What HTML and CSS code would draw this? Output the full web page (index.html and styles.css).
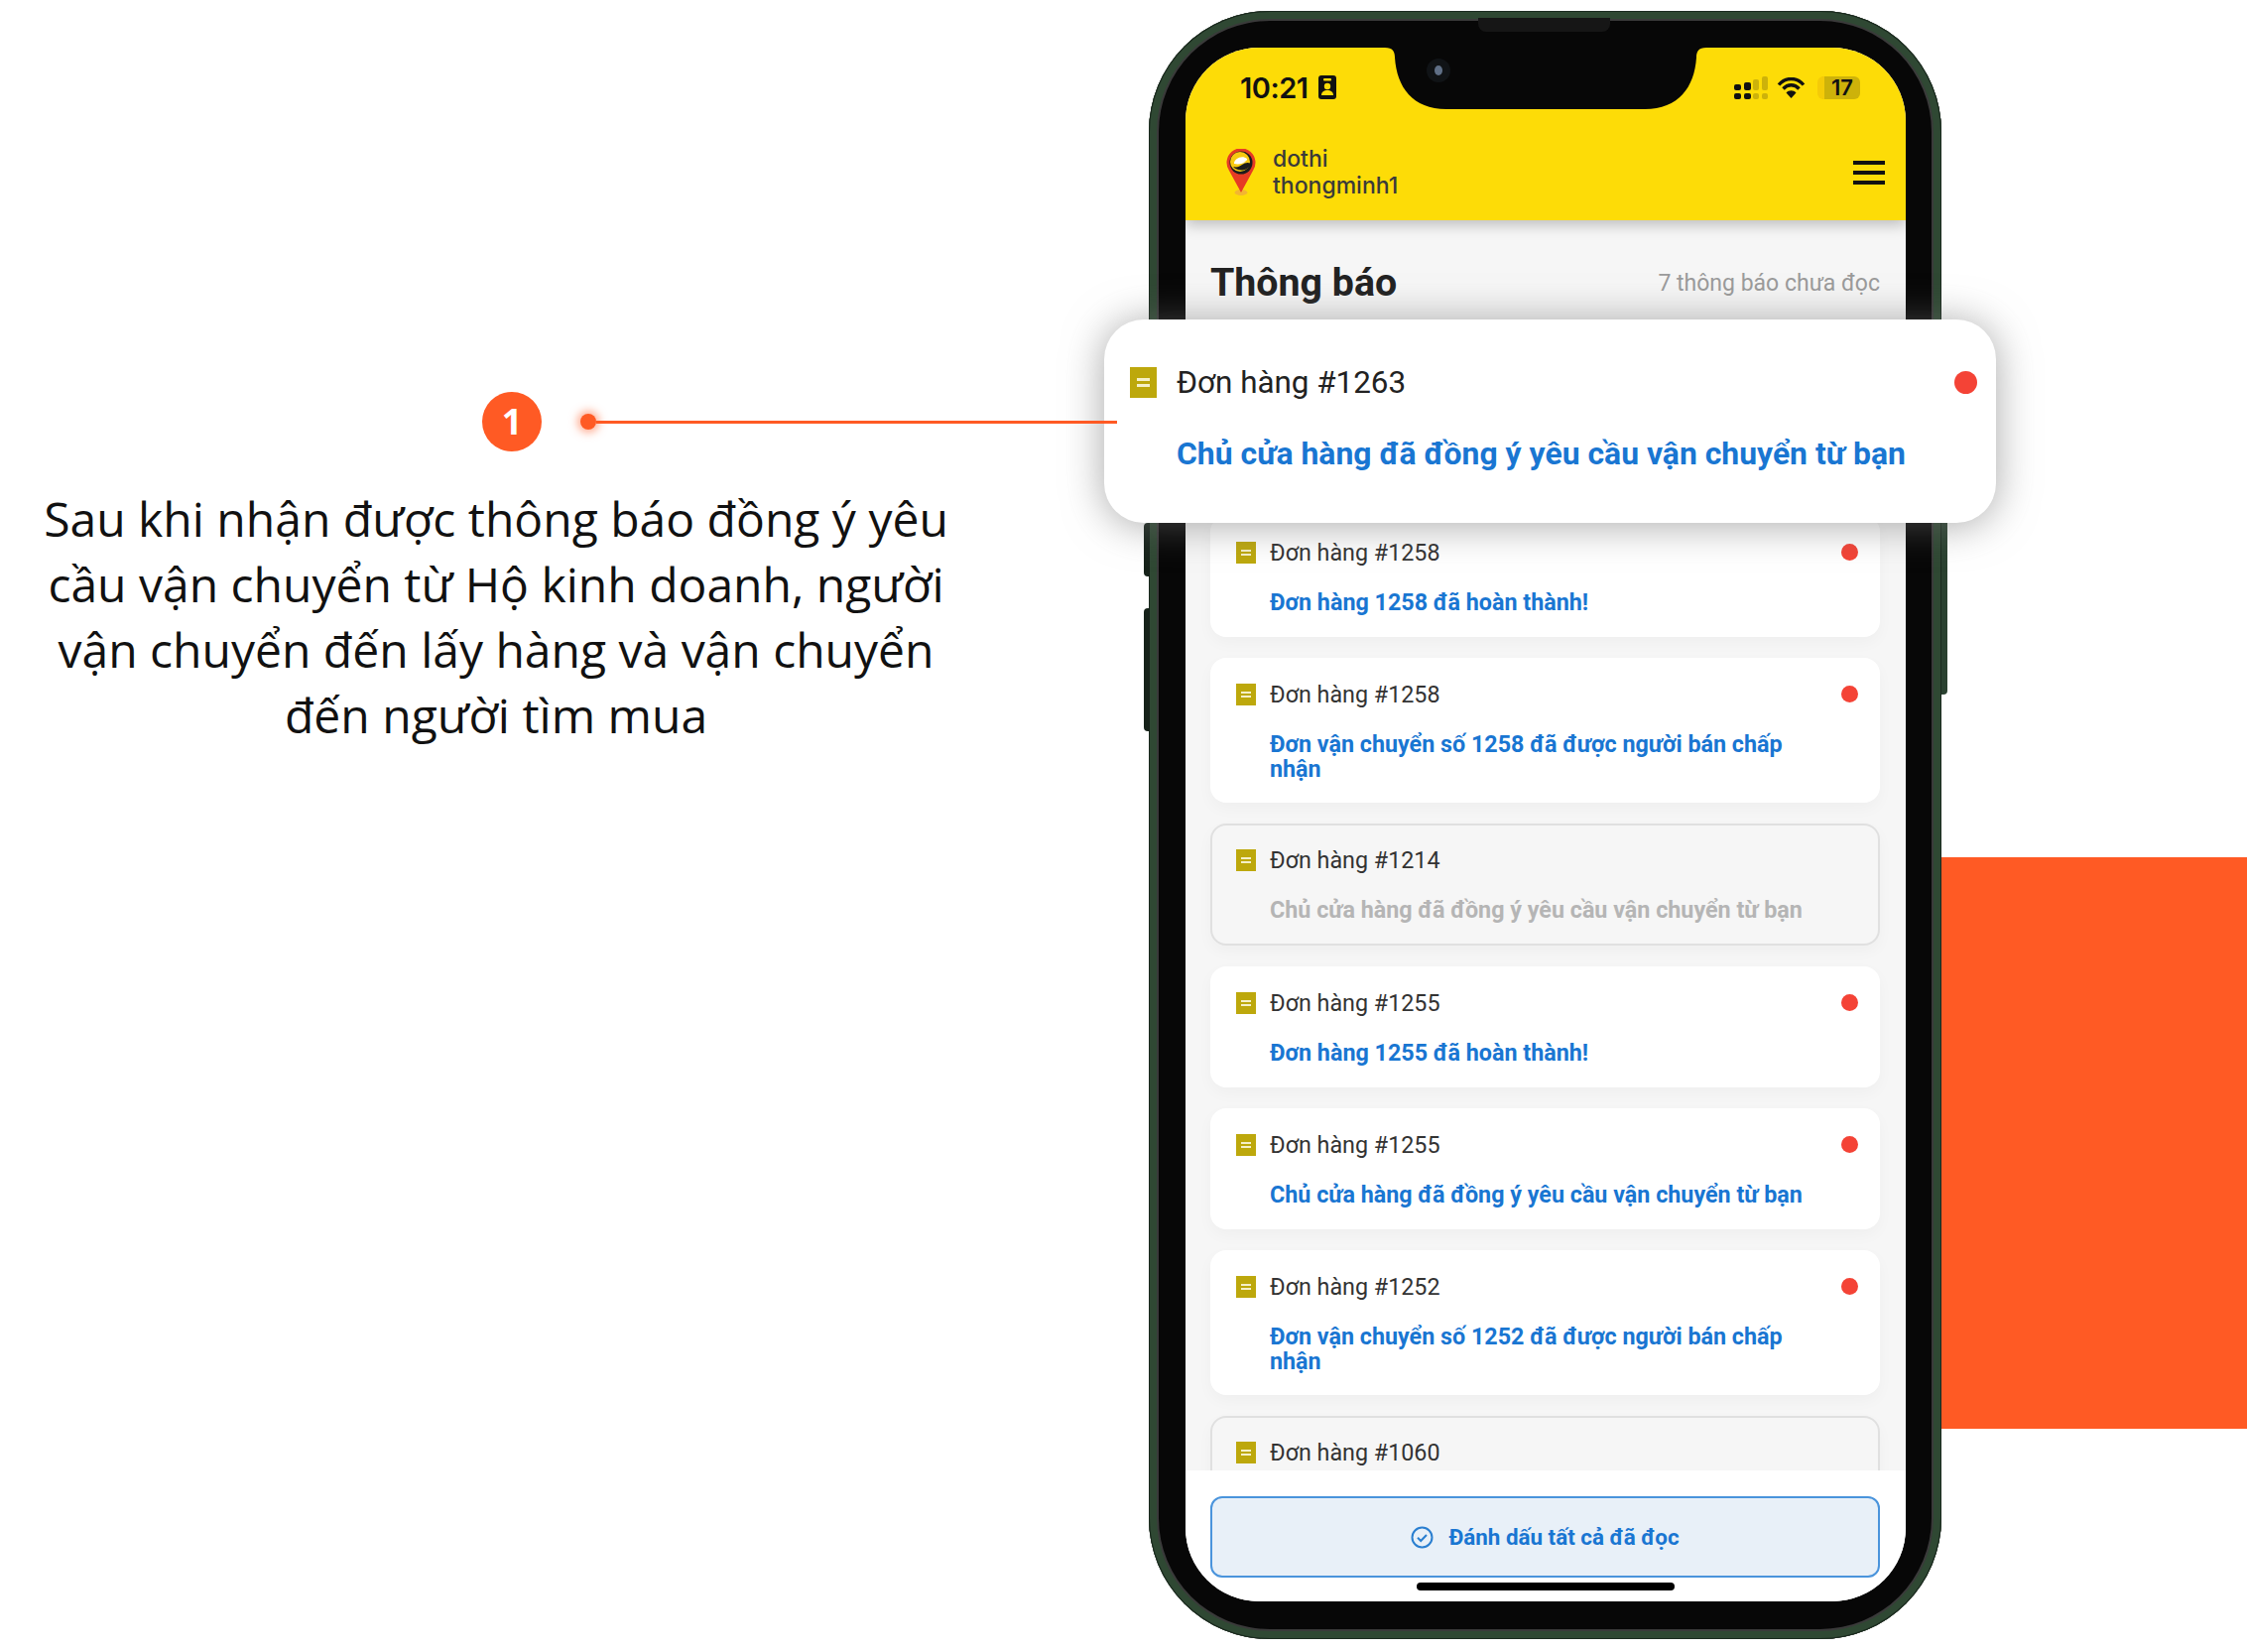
FILE: index.html
```html
<!DOCTYPE html>
<html lang="en">
    <head>
        <meta charset="UTF-8" />
        <meta name="viewport" content="width=device-width, initial-scale=1.0" />
        <title>Thông báo</title>
        <link rel="stylesheet" href="styles.css">
    </head>
    <body>
        <div class="page">
            <div class="orange-block"></div>

            <div class="callout">
                <div class="callout-head">
                    <div class="badge">1</div>
                    <div class="dot-glow"></div>
                    <div class="connector"></div>
                </div>
                <p class="callout-text">Sau khi nhận được thông báo đồng ý yêu cầu vận chuyển từ Hộ kinh doanh, người vận chuyển đến lấy hàng và vận chuyển đến người tìm mua</p>
            </div>

            <div class="phone">
                <div class="side-btn side-btn-1"></div>
                <div class="side-btn side-btn-2"></div>
                <div class="side-btn side-btn-r"></div>
                <div class="speaker"></div>
                <div class="screen">
                    <svg class="notch" width="324" height="62" viewBox="0 0 324 62">
                        <path d="M0 0H324C316 0 314 4 314 10C312 40 296 62 262 62H62C28 62 12 40 10 10C10 4 8 0 0 0Z" fill="#070707"/>
                        <circle cx="54" cy="23" r="12" fill="#101316"/>
                        <ellipse cx="54" cy="23" rx="4" ry="5" fill="#5f6f86"/>
                    </svg>
                    <div class="top-yellow">
                        <div class="status-bar">
                            <div class="status-left">
                                <span class="time">10:21</span>
                                <svg class="contact-icon" width="18" height="24" viewBox="0 0 18 24">
                                    <rect width="18" height="24" rx="3" fill="#111"/>
                                    <rect x="5" y="3" width="8" height="2.4" rx="1" fill="#fddc07"/>
                                    <circle cx="9" cy="11" r="3.2" fill="#fddc07"/>
                                    <path d="M3 20c0-3.4 2.6-5 6-5s6 1.600 6 5z" fill="#fddc07"/>
                                </svg>
                            </div>
                            <div class="status-right">
                                <svg width="35" height="23" viewBox="0 0 35 23">
                                    <rect x="0" y="8" width="7" height="6" rx="2" fill="#111"/>
                                    <rect x="0" y="17" width="7" height="6" rx="2" fill="#111"/>
                                    <rect x="10" y="6" width="7" height="8" rx="2" fill="#111"/>
                                    <rect x="10" y="17" width="7" height="6" rx="2" fill="#111"/>
                                    <rect x="19" y="3" width="6" height="11" rx="2" fill="#cdb20a"/>
                                    <rect x="19" y="17" width="6" height="6" rx="2" fill="#cdb20a"/>
                                    <rect x="28" y="0" width="6" height="14" rx="2" fill="#cdb20a"/>
                                    <rect x="28" y="17" width="6" height="6" rx="2" fill="#cdb20a"/>
                                </svg>
                                <svg class="wifi" width="29" height="21" viewBox="0 0 29 21">
                                    <path d="M2 7.500C9-.5 20-.5 27 7.500M6.500 11.500C11 6.500 18 6.500 22.500 11.500" fill="none" stroke="#111" stroke-width="3.400"/>
                                    <path d="M14.500 21 9.500 15.500C12 12.500 17 12.500 19.500 15.500z" fill="#111"/>
                                </svg>
                                <div class="battery"><span class="battery-num">17</span></div>
                            </div>
                        </div>
                        <div class="app-header">
                            <div class="brand">
                                <svg class="brand-pin" width="30" height="48" viewBox="0 0 30 48">
                                    <ellipse cx="15" cy="44" rx="6.500" ry="3" fill="#f2b632"/>
                                    <path d="M15 44 3 22A14.500 14.500 0 1 1 27 22z" fill="#e63b24"/>
                                    <circle cx="15" cy="14" r="11.500" fill="#1c1c1c"/>
                                    <circle cx="14" cy="13" r="10" fill="#f7c911"/>
                                    <path d="M25 15c-3-2-6-1-9 1-3 2-5 3-9 2 3 4 11 5 15 1 1-1 2-2 3-4z" fill="#1c1c1c"/>
                                    <path d="M8 15c0-5 8-9 13-5 1 2-4 4-8 4 3 0 5-1 7-1-3 2-8 3-12 2z" fill="#fff"/>
                                </svg>
                                <div class="brand-name">dothi<br>thongminh1</div>
                            </div>
                            <div class="hamburger"><span></span><span></span><span></span></div>
                        </div>
                    </div>

                    <div class="notif-area">
                        <div class="notif-head">
                            <h1>Thông báo</h1>
                            <span class="unread-count">7 thông báo chưa đọc</span>
                        </div>
                        <div class="notif-list">
                            <div class="card">
                                <div class="card-title"><span class="doc-icon"></span><span class="card-order">Đơn hàng #1258</span><span class="red-dot"></span></div>
                                <div class="card-body">Đơn hàng 1258 đã hoàn thành!</div>
                            </div>
                            <div class="card">
                                <div class="card-title"><span class="doc-icon"></span><span class="card-order">Đơn hàng #1258</span><span class="red-dot"></span></div>
                                <div class="card-body">Đơn vận chuyển số 1258 đã được người bán chấp nhận</div>
                            </div>
                            <div class="card card-read">
                                <div class="card-title"><span class="doc-icon"></span><span class="card-order">Đơn hàng #1214</span></div>
                                <div class="card-body">Chủ cửa hàng đã đồng ý yêu cầu vận chuyển từ bạn</div>
                            </div>
                            <div class="card">
                                <div class="card-title"><span class="doc-icon"></span><span class="card-order">Đơn hàng #1255</span><span class="red-dot"></span></div>
                                <div class="card-body">Đơn hàng 1255 đã hoàn thành!</div>
                            </div>
                            <div class="card">
                                <div class="card-title"><span class="doc-icon"></span><span class="card-order">Đơn hàng #1255</span><span class="red-dot"></span></div>
                                <div class="card-body">Chủ cửa hàng đã đồng ý yêu cầu vận chuyển từ bạn</div>
                            </div>
                            <div class="card">
                                <div class="card-title"><span class="doc-icon"></span><span class="card-order">Đơn hàng #1252</span><span class="red-dot"></span></div>
                                <div class="card-body">Đơn vận chuyển số 1252 đã được người bán chấp nhận</div>
                            </div>
                            <div class="card card-read">
                                <div class="card-title"><span class="doc-icon"></span><span class="card-order">Đơn hàng #1060</span></div>
                            </div>
                        </div>
                    </div>

                    <div class="bottom-bar">
                        <button class="mark-read">
                            <svg width="23" height="23" viewBox="0 0 23 23">
                                <circle cx="11.500" cy="11.500" r="10" fill="none" stroke="#2a7fd0" stroke-width="2"/>
                                <path d="M7 11.800l3.200 3.200 5.800-6" fill="none" stroke="#2a7fd0" stroke-width="2"/>
                            </svg>
                            Đánh dấu tất cả đã đọc
                        </button>
                        <div class="home-bar"></div>
                    </div>
                </div>
            </div>

            <div class="popup">
                <div class="popup-title"><span class="doc-icon doc-icon-big"></span><span class="popup-order">Đơn hàng #1263</span><span class="red-dot red-dot-big"></span></div>
                <div class="popup-body">Chủ cửa hàng đã đồng ý yêu cầu vận chuyển từ bạn</div>
            </div>
        </div>
    </body>
</html>
```

FILE: styles.css
```css
body {
    margin: 0;
    background-color: #fff;
    font-family: Roboto, "Liberation Sans", sans-serif;
}
.page {
    position: relative;
    display: flex;
    width: 2265px;
    height: 1665px;
    overflow: hidden;
}
.orange-block {
    position: absolute;
    left: 1950px;
    top: 864px;
    width: 315px;
    height: 576px;
    background-color: #ff5a24;
}

/* left side text */
.callout {
    position: relative;
    z-index: 3;
    width: 1000px;
    padding-top: 395px;
    flex-shrink: 0;
}
.callout-head {
    display: flex;
    align-items: center;
    padding-left: 486px;
    width: 640px;
}
.badge {
    width: 60px;
    height: 60px;
    border-radius: 50%;
    background-color: #ff5a24;
    color: #fff;
    font-family: "Open Sans", sans-serif;
    font-weight: 700;
    font-size: 36px;
    line-height: 60px;
    text-align: center;
    flex-shrink: 0;
}
.dot-glow {
    width: 16px;
    height: 16px;
    margin-left: 39px;
    border-radius: 50%;
    background-color: #ff5a24;
    box-shadow: 0 0 8px 3px rgba(255, 90, 36, 0.5);
    flex-shrink: 0;
}
.connector {
    flex: 1;
    height: 3px;
    background-color: #ff5a24;
}
.callout-text {
    margin: 35px 0 0;
    padding: 0 20px;
    text-align: center;
    font-family: "Open Sans", sans-serif;
    font-size: 48px;
    line-height: 66px;
    color: #111;
}

/* phone */
.phone {
    position: relative;
    box-sizing: border-box;
    width: 799px;
    height: 1641px;
    margin: 11px 0 0 158px;
    padding: 37px 36px 38px 37px;
    border-radius: 122px;
    background-color: #070707;
    box-shadow: inset 0 0 0 1px #1b2a1f, inset 0 0 0 8px #2f4833, inset 0 0 0 10px #3a3a3a;
    flex-shrink: 0;
    z-index: 1;
}
.side-btn {
    position: absolute;
    left: -5px;
    width: 6px;
    background-color: #16221a;
    border-radius: 4px 0 0 4px;
}
.side-btn-1 {
    top: 516px;
    height: 54px;
}
.side-btn-2 {
    top: 602px;
    height: 124px;
}
.side-btn-r {
    left: auto;
    right: -6px;
    top: 480px;
    height: 209px;
    background-color: #2a4130;
    border-radius: 0 4px 4px 0;
}
.speaker {
    position: absolute;
    left: 332px;
    top: 7px;
    width: 133px;
    height: 14px;
    background-color: #161616;
    border-radius: 0 0 8px 8px;
}
.screen {
    position: relative;
    display: flex;
    flex-direction: column;
    height: 100%;
    overflow: hidden;
    border-radius: 74px;
    background-color: #fff;
}
.notch {
    position: absolute;
    left: 201px;
    top: 0;
    z-index: 2;
}

/* yellow top */
.top-yellow {
    height: 174px;
    background-color: #fddc07;
    flex-shrink: 0;
    box-shadow: 0 4px 14px rgba(0, 0, 0, 0.25);
    position: relative;
    z-index: 1;
}
.status-bar {
    display: flex;
    justify-content: space-between;
    align-items: center;
    height: 54px;
    padding: 13px 46px 0 55px;
}
.status-left {
    display: flex;
    align-items: center;
    gap: 11px;
}
.time {
    font-family: Inter, sans-serif;
    font-weight: 600;
    font-size: 29px;
    letter-spacing: -0.5px;
    color: #111;
}
.status-right {
    display: flex;
    align-items: center;
    gap: 10px;
}
.wifi {
    margin-left: -2px;
    margin-right: 2px;
}
.battery {
    position: relative;
    width: 43px;
    height: 23px;
    border-radius: 6px;
    background-color: #cdb20a;
    border-left: 7px solid #f4cb08;
    box-sizing: border-box;
    text-align: center;
}
.battery-num {
    font-family: Inter, sans-serif;
    font-weight: 600;
    font-size: 22px;
    line-height: 23px;
    color: #111;
}
.app-header {
    display: flex;
    justify-content: space-between;
    align-items: center;
    box-sizing: border-box;
    height: 106px;
    padding: 12px 21px 0 41px;
}
.brand {
    display: flex;
    align-items: center;
    gap: 17px;
}
.brand-name {
    font-family: Inter, sans-serif;
    font-weight: 500;
    font-size: 23px;
    line-height: 27px;
    color: #3a3a3a;
}
.hamburger {
    display: flex;
    flex-direction: column;
    gap: 6px;
    width: 32px;
}
.hamburger span {
    height: 4px;
    background-color: #111;
}

/* notifications */
.notif-area {
    flex: 1;
    min-height: 0;
    overflow: hidden;
    background-color: #f6f6f6;
    padding: 0 26px 0 25px;
}
.notif-head {
    display: flex;
    justify-content: space-between;
    align-items: center;
    height: 126px;
}
.notif-head h1 {
    margin: 0;
    font-size: 39.3px;
    font-weight: 700;
    color: #222;
}
.unread-count {
    font-size: 23px;
    color: #9b9b9b;
}
.notif-list {
    display: flex;
    flex-direction: column;
    gap: 21px;
    margin-top: 172px;
}
.card {
    box-sizing: border-box;
    min-height: 122px;
    padding: 23px 22px 0 26px;
    border-radius: 16px;
    background-color: #fff;
    box-shadow: 0 6px 16px rgba(0, 0, 0, 0.03);
}
.card-read {
    min-height: 120px;
    background-color: #f6f6f6;
    border: 2px solid #e0e0e0;
    padding: 21px 20px 0 24px;
}
.card-title {
    display: flex;
    align-items: center;
    height: 28px;
}
.doc-icon {
    position: relative;
    width: 20px;
    height: 22px;
    margin-right: 14px;
    background-color: #bda80c;
    flex-shrink: 0;
}
.doc-icon::after {
    content: "";
    position: absolute;
    left: 5px;
    top: 8px;
    width: 10px;
    height: 2px;
    border-top: 2px solid #f5f0c8;
    border-bottom: 2px solid #f5f0c8;
}
.card-order {
    font-size: 23.3px;
    color: #333;
}
.red-dot {
    width: 17px;
    height: 17px;
    margin-left: auto;
    margin-top: -2px;
    border-radius: 50%;
    background-color: #f44336;
    flex-shrink: 0;
}
.card-body {
    margin: 24px 0 0 34px;
    padding-bottom: 21px;
    padding-right: 40px;
    font-size: 23.3px;
    font-weight: 700;
    line-height: 25px;
    color: #1976d2;
}
.card-read .card-body {
    color: #b5b5b5;
}

/* button at the bottom */
.bottom-bar {
    position: relative;
    height: 132px;
    flex-shrink: 0;
    background-color: #fff;
    padding: 26px 26px 0 25px;
    box-sizing: border-box;
}
.mark-read {
    display: flex;
    justify-content: center;
    align-items: center;
    gap: 15px;
    box-sizing: border-box;
    width: 100%;
    height: 82px;
    border: 2px solid #4a94dc;
    border-radius: 12px;
    background-color: #e8f0f8;
    color: #1976d2;
    font-family: Roboto, sans-serif;
    font-size: 22.4px;
    font-weight: 700;
}
.home-bar {
    position: absolute;
    left: 233px;
    bottom: 11px;
    width: 260px;
    height: 8px;
    border-radius: 4px;
    background-color: #000;
}

/* popup over the phone */
.popup {
    position: absolute;
    left: 1113px;
    top: 322px;
    z-index: 2;
    box-sizing: border-box;
    width: 899px;
    height: 205px;
    padding: 47px 19px 0 26px;
    border-radius: 40px;
    background-color: #fff;
    box-shadow: 0 2px 40px rgba(110, 110, 110, 0.6);
}
.popup-title {
    display: flex;
    align-items: center;
    height: 32px;
}
.doc-icon-big {
    width: 27px;
    height: 31px;
    margin-right: 20px;
}
.doc-icon-big::after {
    left: 7px;
    top: 11px;
    width: 13px;
    height: 3px;
    border-top-width: 3px;
    border-bottom-width: 3px;
}
.popup-order {
    font-size: 31.4px;
    color: #222;
}
.red-dot-big {
    width: 23px;
    height: 23px;
    margin-top: 0;
}
.popup-body {
    margin: 37px 0 0 47px;
    font-size: 31.9px;
    font-weight: 700;
    color: #1976d2;
}
```
